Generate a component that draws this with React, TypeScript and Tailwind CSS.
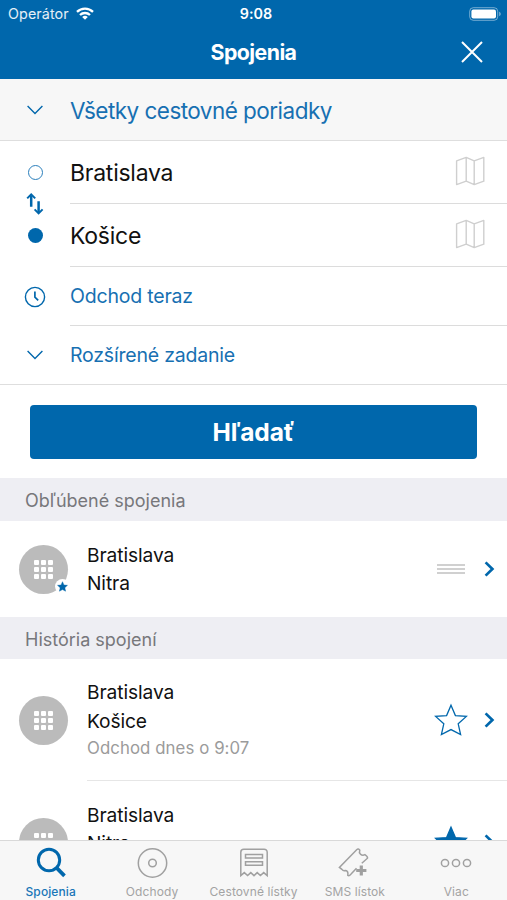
import type { ReactNode } from 'react'

const BLUE = '#0067ac'

function ChevronDown() {
  return (
    <svg width="18" height="12" viewBox="0 0 18 12" fill="none" stroke={BLUE} strokeWidth="1.4">
      <path d="M1.6 2l7.4 7.4L16.4 2" />
    </svg>
  )
}

function ChevronRight() {
  return (
    <svg width="12" height="18" viewBox="0 0 12 18" fill="none" stroke={BLUE} strokeWidth="2.7">
      <path d="M1.6 2.4L8.4 9L1.6 15.6" />
    </svg>
  )
}

function MapIcon() {
  return (
    <svg className="mb-[4px]" width="30" height="30" viewBox="0 0 30 30" fill="none" stroke="#cfcfcf" strokeWidth="1.4" strokeLinejoin="round">
      <path d="M1.6 4.8L11.2 1.4L19.2 4.8L28.8 1.4V25.2L19.2 28.6L11.2 25.2L1.6 28.6zM11.2 1.4V25.2M19.2 4.8V28.6" />
    </svg>
  )
}

function ClockIcon() {
  return (
    <svg width="22" height="22" viewBox="0 0 22 22" fill="none" stroke={BLUE} strokeWidth="1.4">
      <circle cx="11" cy="11" r="9.6" />
      <path d="M10.9 5.6V11.2L14.2 14.4" strokeWidth="1.7" />
    </svg>
  )
}

function SwapIcon() {
  return (
    <svg width="18" height="24" viewBox="0 0 18 24" fill="none" stroke={BLUE} strokeWidth="2.5">
      <path d="M5.2 14.8V3.5M12.6 9.2V20" />
      <path d="M1.2 6.4L5.2 2.4L9.2 6.4M8.6 17.4L12.6 21.4L16.6 17.4" strokeWidth="2" />
    </svg>
  )
}

function Star({ size, filled }: { size: number; filled?: boolean }) {
  return (
    <svg width={size} height={size} viewBox="0 0 34 34" fill={filled ? BLUE : 'none'} stroke={BLUE} strokeWidth="1.3">
      <path d="M17 2.2L21.4 12.6L32.4 13.4L24.2 20.8L26.6 31.6L17 26.6L7.4 31.6L9.8 20.8L1.6 13.4L12.6 12.6z" />
    </svg>
  )
}

function Avatar({ favourite }: { favourite?: boolean }) {
  return (
    <div className="relative grid size-[49px] place-items-center rounded-full bg-[#bbbbbb]">
      <div className="grid grid-cols-3 gap-[2px]">
        {Array.from({ length: 9 }, (_, i) => (
          <span key={i} className="size-[5px] rounded-[1px] bg-white" />
        ))}
      </div>
      {favourite && (
        <span className="absolute -right-[2px] bottom-0 grid size-[15px] place-items-center rounded-full bg-white">
          <Star size={11} filled />
        </span>
      )}
    </div>
  )
}

function StatusBar() {
  return (
    <div className="grid h-[27px] grid-cols-[1fr_auto_1fr] items-center px-[7px]">
      <div className="flex items-center gap-[7px] pl-[1px]">
        <span className="text-[14.3px] tracking-[0.1px] text-white/90">Operátor</span>
        <svg width="18" height="13" viewBox="0 0 18 13" fill="none" stroke="white" strokeWidth="2.3">
          <path d="M1 4.8a11.5 11.5 0 0 1 16 0M4 8a7.2 7.2 0 0 1 10 0" />
          <path d="M9 12.8L6.2 10a4 4 0 0 1 5.6 0z" fill="white" stroke="none" />
        </svg>
      </div>
      <span className="pl-[5px] text-[14.3px] font-semibold tracking-[0.1px]">9:08</span>
      <svg className="-mr-[1px] justify-self-end" width="32" height="14" viewBox="0 0 32 14" fill="white">
        <rect x="0.7" y="0.7" width="28" height="12.6" rx="3.6" fill="none" stroke="white" strokeOpacity="0.45" />
        <rect x="2.4" y="2.4" width="24.6" height="9.2" rx="2" />
        <path d="M30.2 4.8v4.4c1-.4 1.5-1.2 1.5-2.2s-.5-1.8-1.5-2.2z" opacity="0.5" />
      </svg>
    </div>
  )
}

function FormRow({ icon, height, border, children }: { icon: ReactNode; height: string; border?: boolean; children: ReactNode }) {
  return (
    <div className={`flex ${height}`}>
      <div className="flex w-[70px] items-center justify-center">{icon}</div>
      <div className={`flex flex-1 items-center justify-between pr-[22px] pt-[2px] ${border ? 'border-b border-[#dcdcdc]' : ''}`}>
        {children}
      </div>
    </div>
  )
}

function SectionHeader({ title, height }: { title: string; height: string }) {
  return (
    <h2 className={`flex items-center bg-[#eeeef3] pl-[25px] pt-[2px] text-[18px] text-[#77777b] ${height}`}>{title}</h2>
  )
}

interface Connection {
  from: string
  to: string
  note?: string
  favourite?: boolean
  action: ReactNode
}

function ConnectionRow({ item, height }: { item: Connection; height: string }) {
  return (
    <div className={`flex pl-[19px] ${height}`}>
      <div className="flex w-[68px] items-center">
        <Avatar favourite={item.favourite} />
      </div>
      <div className={`flex flex-1 items-center justify-between pr-[11px] ${item.note ? 'border-b border-[#e6e6e6]' : ''}`}>
        <div className={`text-[19.2px] leading-[28.5px] tracking-[-0.1px] text-[#111] ${item.favourite ? '' : 'min-h-[83px]'}`}>
          <p>{item.from}</p>
          <p>{item.to}</p>
          {item.note && <p className="text-[16.8px] leading-[26px] tracking-[0.08px] text-[#9b9b9b]">{item.note}</p>}
        </div>
        <div className="flex items-center gap-[16px]">
          <div className="flex w-[34px] justify-center">{item.action}</div>
          <ChevronRight />
        </div>
      </div>
    </div>
  )
}

const history: Connection[] = [
  { from: 'Bratislava', to: 'Košice', note: 'Odchod dnes o 9:07', action: <Star size={34} /> },
  { from: 'Bratislava', to: 'Nitra', action: <Star size={34} filled /> },
]

const tabs = [
  {
    label: 'Spojenia',
    active: true,
    icon: (
      <g stroke={BLUE} strokeWidth="3">
        <circle cx="15" cy="13" r="10.7" />
        <path d="M22.4 20.6L30.5 28.9" strokeWidth="3.7" />
      </g>
    ),
  },
  {
    label: 'Odchody',
    icon: (
      <>
        <circle cx="17.5" cy="16" r="14.2" />
        <circle cx="17.5" cy="16" r="3.8" />
      </>
    ),
  },
  {
    label: 'Cestovné lístky',
    icon: (
      <path
        transform="translate(1 0)"
        d="M3.8 28.6V5.2a3 3 0 0 1 3-3H27.2a3 3 0 0 1 3 3V28.6L26.7 25.6L23.4 28.6L20.2 25.6L17 28.6L13.8 25.6L10.6 28.6L7.3 25.6zM8.5 7.5H25.5V11H8.5zM8.5 14.7H25.5V18.2H8.5z"
      />
    ),
  },
  {
    label: 'SMS lístok',
    icon: (
      <>
        <path d="M18.5 21.2L13.8 26.2Q11.5 29.6 9.8 28.4L9.9 26.2Q9.8 23.7 7.2 23.5Q5.2 24.1 3.9 22.4L1.4 20.4L18.9 2.5Q20.3 1.3 21.8 3.2Q20.8 5.4 22.4 7.1Q24.5 8.9 26.9 7.6Q29.9 9.6 29.5 11.2L23.8 16.3" />
        <path d="M23.3 18.4V28.6M18.2 23.5H28.4" strokeWidth="3.2" />
      </>
    ),
  },
  {
    label: 'Viac',
    icon: (
      <>
        <circle cx="6" cy="16" r="3.6" />
        <circle cx="17" cy="16" r="3.6" />
        <circle cx="28" cy="16" r="3.6" />
      </>
    ),
  },
]

function TabBar() {
  return (
    <nav className="grid h-[60px] shrink-0 grid-cols-5 border-t border-[#d9d9d9] bg-[#f7f7f7]">
      {tabs.map((tab) => (
        <button key={tab.label} className={`flex flex-col items-center pt-[6px] ${tab.active ? 'text-[#1a76b8]' : 'text-[#a3a3a3]'}`}>
          <svg width="34" height="32" viewBox="0 0 34 32" fill="none" stroke="#a0a0a0" strokeWidth="1.5">
            {tab.icon}
          </svg>
          <span className={`mt-[4px] whitespace-nowrap text-[12px] leading-[18px] tracking-[0.1px] ${tab.active ? 'font-medium' : ''}`}>{tab.label}</span>
        </button>
      ))}
    </nav>
  )
}

export default function App() {
  return (
    <div className="flex h-[900px] w-[507px] flex-col overflow-hidden bg-white font-['Inter',sans-serif]">
      <header className="h-[79px] shrink-0 bg-[#0067ac] text-white">
        <StatusBar />
        <div className="grid h-[51px] grid-cols-[1fr_auto_1fr] items-center px-[23px]">
          <h1 className="col-start-2 text-[21.3px] font-bold tracking-[-0.55px]">Spojenia</h1>
          <button className="-mt-[2px] justify-self-end">
            <svg width="24" height="24" viewBox="0 0 24 24" stroke="white" strokeWidth="2">
              <path d="M2 2L22 22M22 2L2 22" />
            </svg>
          </button>
        </div>
      </header>

      <main className="min-h-0 flex-1 overflow-hidden">
        <div className="border-b border-[#dedede] bg-[#f7f7f7] text-[22.5px] tracking-[-0.53px] text-[#1770b2]">
          <FormRow icon={<ChevronDown />} height="h-[61px]">
            Všetky cestovné poriadky
          </FormRow>
        </div>

        <section className="relative border-b border-[#dedede]">
          <div className="text-[23px] tracking-[-0.25px] text-[#111]">
            <FormRow icon={<span className="size-[15px] rounded-full border-[1.5px] border-[#2b7fbc]" />} height="h-[63px]" border>
              Bratislava
              <MapIcon />
            </FormRow>
            <FormRow icon={<span className="size-[15px] rounded-full bg-[#0067ac]" />} height="h-[63px]" border>
              Košice
              <MapIcon />
            </FormRow>
          </div>
          <button className="absolute left-[26px] top-[51px]">
            <SwapIcon />
          </button>
          <div className="text-[19.5px] tracking-[-0.2px] text-[#1770b2]">
            <FormRow icon={<ClockIcon />} height="h-[59px]" border>
              Odchod teraz
            </FormRow>
            <FormRow icon={<ChevronDown />} height="h-[58px]">
              Rozšírené zadanie
            </FormRow>
          </div>
        </section>

        <div className="px-[30px] pb-[19px] pt-[20px]">
          <button className="h-[54px] w-full rounded-[4px] bg-[#0067ac] pt-[1px] text-[24.5px] font-bold tracking-[-0.1px] text-white">Hľadať</button>
        </div>

        <SectionHeader title="Obľúbené spojenia" height="h-[43px]" />
        <ConnectionRow
          height="h-[96px]"
          item={{
            from: 'Bratislava',
            to: 'Nitra',
            favourite: true,
            action: (
              <svg width="28" height="12" viewBox="0 0 28 12" stroke="#d0d0d0" strokeWidth="2">
                <path d="M0 2H28M0 6H28M0 10H28" />
              </svg>
            ),
          }}
        />

        <SectionHeader title="História spojení" height="h-[42px]" />
        {history.map((item) => (
          <ConnectionRow key={item.to} item={item} height="h-[122px]" />
        ))}
      </main>

      <TabBar />
    </div>
  )
}
